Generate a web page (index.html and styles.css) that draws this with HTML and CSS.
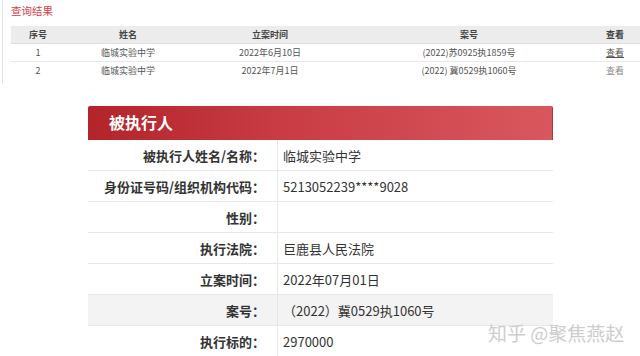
FILE: index.html
```html
<!DOCTYPE html>
<html>

<head>
    <meta charset="UTF-8">
    <title>查询结果</title>
    <link rel="stylesheet" href="styles.css">
</head>

<body>
    <div class="result">
        <h2 class="result-title">查询结果</h2>
        <table class="result-table">
            <thead>
                <tr>
                    <th class="c-no">序号</th>
                    <th class="c-name">姓名</th>
                    <th class="c-date">立案时间</th>
                    <th class="c-case">案号</th>
                    <th class="c-view">查看</th>
                </tr>
            </thead>
            <tbody>
                <tr>
                    <td>1</td>
                    <td>临城实验中学</td>
                    <td>2022年6月10日</td>
                    <td>(2022)苏0925执1859号</td>
                    <td><a href="#" class="view-link">查看</a></td>
                </tr>
                <tr>
                    <td>2</td>
                    <td>临城实验中学</td>
                    <td>2022年7月1日</td>
                    <td>(2022) 冀0529执1060号</td>
                    <td><a href="#" class="view-link faint">查看</a></td>
                </tr>
            </tbody>
        </table>
    </div>

    <div class="panel">
        <div class="panel-head">被执行人</div>
        <table class="detail">
            <tr>
                <th>被执行人姓名/名称：</th>
                <td>临城实验中学</td>
            </tr>
            <tr>
                <th>身份证号码/组织机构代码：</th>
                <td>5213052239****9028</td>
            </tr>
            <tr>
                <th>性别：</th>
                <td></td>
            </tr>
            <tr>
                <th>执行法院：</th>
                <td>巨鹿县人民法院</td>
            </tr>
            <tr>
                <th>立案时间：</th>
                <td>2022年07月01日</td>
            </tr>
            <tr class="hover">
                <th>案号：</th>
                <td>（2022）冀0529执1060号</td>
            </tr>
            <tr>
                <th>执行标的：</th>
                <td>2970000</td>
            </tr>
        </table>
    </div>

    <div class="watermark">知乎 @聚焦燕赵</div>
</body>

</html>
```

FILE: styles.css
```css
body {
    margin: 0;
    font-family: "Noto Sans CJK SC", "Liberation Sans", sans-serif;
    background-color: #fff;
    color: #333;
    position: relative;
    height: 356px;
    overflow: hidden;
}

.result {
    padding: 4px 0 0 8px;
    border-left: 1px solid #e4e4e4;
    margin-left: 2px;
    height: 84px;
    box-sizing: border-box;
}

.result-title {
    margin: 0 0 8px 0;
    font-size: 10.5px;
    line-height: 14px;
    font-weight: normal;
    color: #d63c48;
}

.result-table {
    width: 630px;
    border-collapse: collapse;
    font-size: 9px;
    color: #555;
}

.result-table th {
    background-color: #ececec;
    height: 17px;
    padding: 0;
    font-weight: bold;
    color: #444;
    border-bottom: 1px solid #e0e0e0;
}

.result-table td {
    height: 17px;
    padding: 0;
    text-align: center;
    border-bottom: 1px solid #e8e8e8;
}

.result-table tbody tr:last-child td {
    border-bottom: none;
}

.c-no { width: 54px; }
.c-name { width: 126px; }
.c-date { width: 158px; }
.c-case { width: 240px; }

.view-link {
    color: #555;
    text-decoration: underline;
}

.view-link.faint {
    color: #8a8a8a;
    text-decoration: none;
}

.panel {
    margin: 22px 0 0 88px;
    width: 465px;
}

.panel-head {
    height: 34px;
    line-height: 33px;
    padding-left: 21px;
    font-size: 16px;
    font-weight: bold;
    color: #fff;
    background: linear-gradient(to right, #b2232a, #c93b42 40%, #d9575e);
    border-right: 1px solid #a83a3e;
    border-radius: 2px 2px 0 0;
}

.detail {
    width: 100%;
    border-collapse: collapse;
    font-size: 13px;
}

.detail th,
.detail td {
    height: 30px;
    padding: 0;
    border-bottom: 1px solid #e8e8e8;
}

.detail th {
    width: 177px;
    padding-right: 12px;
    text-align: right;
    font-weight: bold;
    color: #333;
    border-right: 1px solid #e6e6e6;
}

.detail td {
    padding-left: 5px;
    color: #333;
}

.detail tr.hover th,
.detail tr.hover td {
    background-color: #f3f3f3;
}

/* watermark sits over the table */
.watermark {
    position: absolute;
    left: 488px;
    top: 320px;
    font-size: 19px;
    line-height: 26px;
    color: #cdcdcd;
}
```
